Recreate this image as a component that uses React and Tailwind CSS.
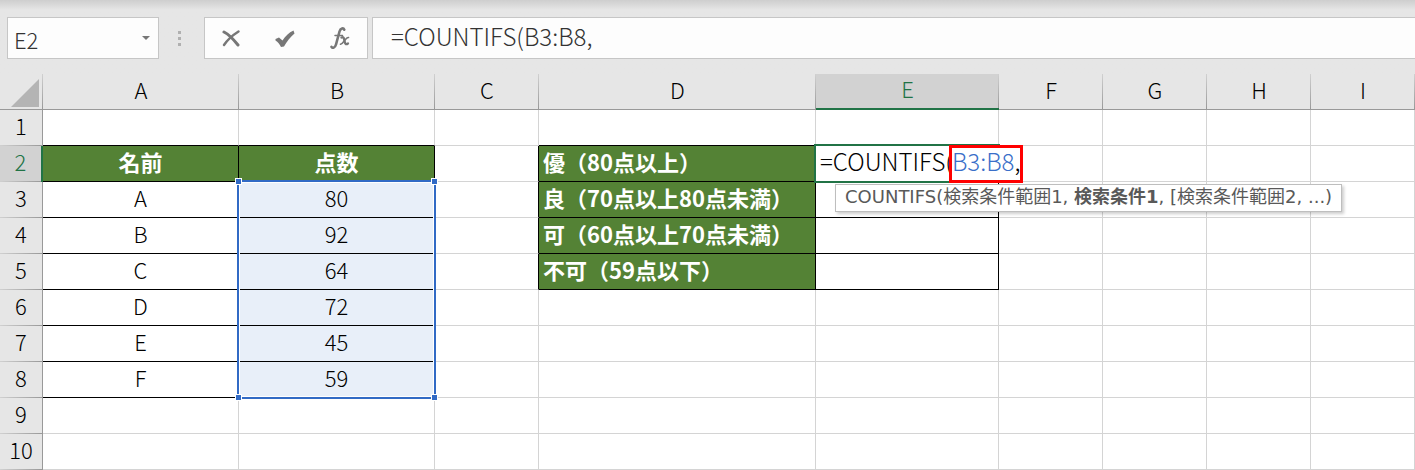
import { useState } from "react";

const columns = [
  { name: "A", width: "w-[196px]" },
  { name: "B", width: "w-[196px]" },
  { name: "C", width: "w-[104px]" },
  { name: "D", width: "w-[277px]" },
  { name: "E", width: "w-[183px]" },
  { name: "F", width: "w-[104px]" },
  { name: "G", width: "w-[104px]" },
  { name: "H", width: "w-[104px]" },
  { name: "I", width: "w-[104px]" },
];

const rows = [1, 2, 3, 4, 5, 6, 7, 8, 9, 10];

const values = {
  A2: "名前",
  B2: "点数",
  A3: "A",
  B3: "80",
  A4: "B",
  B4: "92",
  A5: "C",
  B5: "64",
  A6: "D",
  B6: "72",
  A7: "E",
  B7: "45",
  A8: "F",
  B8: "59",
  D2: "優（80点以上）",
  D3: "良（70点以上80点未満）",
  D4: "可（60点以上70点未満）",
  D5: "不可（59点以下）",
};

function cellClass(col, row) {
  const inScores = (col === "A" || col === "B") && row >= 2 && row <= 8;
  const inGrades = (col === "D" || col === "E") && row >= 2 && row <= 5;
  const blackRight = inScores || inGrades || (col === "C" && row >= 2 && row <= 5);
  const blackBottom =
    inScores || inGrades || (row === 1 && ["A", "B", "D", "E"].includes(col));
  const green = (inScores && row === 2) || (inGrades && col === "D");
  const picked = col === "B" && row >= 3 && row <= 8;

  return [
    "h-9 pt-0 pb-1.5 pr-0 border-r border-b leading-7 whitespace-nowrap",
    blackRight ? "border-r-black" : "border-r-[#d4d4d4]",
    blackBottom ? "border-b-black" : "border-b-[#d4d4d4]",
    green ? "bg-[#548235] text-white font-bold" : "font-light",
    picked ? "bg-[#e8eff9]" : "",
    col === "D" ? "text-left pl-1" : "text-center pl-0",
    (col === "B" && row === 3) || (col === "E" && row === 2) ? "relative" : "",
  ].join(" ");
}

function RangeOutline() {
  const handle = "absolute size-[7px] border border-white bg-[#316ac5]";
  return (
    <div className="absolute -top-0.5 -left-0.5 -right-0.5 z-10 h-[219px] border-2 border-[#316ac5]">
      <div className="h-full border border-white" />
      <span className={`${handle} -top-1 -left-1`} />
      <span className={`${handle} -top-1 -right-1`} />
      <span className={`${handle} -bottom-1 -left-1`} />
      <span className={`${handle} -bottom-1 -right-1`} />
    </div>
  );
}

function CellEditor() {
  return (
    <>
      <div className="absolute -top-0.5 -left-0.5 -right-0.5 z-10 h-[39px] border-2 border-[#217346] bg-white" />
      <div className="absolute top-0 left-1 z-20 flex h-[35px] items-center text-2xl leading-7">
        <span className="pb-1.5">=COUNTIFS(</span>
        <span className="relative -ml-1 flex h-[38px] items-center border-3 border-[#ff0000] bg-white">
          <span className="pb-1.5">
            <span className="text-[#3a6fc9]">B3:B8</span>,
          </span>
        </span>
      </div>
      <div
        role="tooltip"
        className="absolute top-[38px] left-[19px] z-30 flex h-7 items-center border border-[#bebebe] bg-white px-[9px] pb-0.5 font-['DejaVu_Sans','Noto_Sans_CJK_JP',sans-serif] text-lg leading-6 font-normal text-[#595959] shadow-[2px_2px_3px_rgba(0,0,0,0.2)]"
      >
        <span className="whitespace-pre">
          COUNTIFS(検索条件範囲1, <b>検索条件1</b>, [検索条件範囲2, ...)
        </span>
      </div>
    </>
  );
}

function FormulaBar() {
  const [name, setName] = useState("E2");
  const [formula, setFormula] = useState("=COUNTIFS(B3:B8,");

  return (
    <div className="flex h-[74px] items-start bg-linear-to-b from-[#cecece] to-[#e6e6e6] to-[10px] pt-[17px] pl-[7px]">
      <div className="flex h-[42px] w-[152px] shrink-0 items-center border border-[#c6c6c6] bg-[#fdfdfd]">
        <input
          aria-label="名前ボックス"
          value={name}
          onChange={(e) => setName(e.target.value)}
          className="h-full w-0 grow bg-transparent pt-0.5 pl-1.5 font-light text-[#333] outline-none"
        />
        <button aria-label="名前の一覧" className="flex h-full w-6 items-center justify-center">
          <svg width="8" height="4" viewBox="0 0 8 4">
            <path d="M0 0h8L4 4z" fill="#777" />
          </svg>
        </button>
      </div>
      <div className="flex h-[42px] w-[45px] shrink-0 items-center justify-center pr-1">
        <svg width="3" height="15" viewBox="0 0 3 15" fill="#b0b0b0">
          <path d="M0 0h3v3H0zM0 6h3v3H0zM0 12h3v3H0z" />
        </svg>
      </div>
      <div className="flex h-[42px] w-[164px] shrink-0 items-center justify-around border border-[#c6c6c6] bg-[#fdfdfd]">
        <button aria-label="キャンセル">
          <svg width="18" height="17" viewBox="0 0 18 17" fill="none" stroke="#777" strokeLinecap="round">
            <path d="M2 2C6 4 12 10 16 15" strokeWidth="3" />
            <path d="M16.500 1.500C11 5 6 9 2 15" strokeWidth="2.400" />
          </svg>
        </button>
        <button aria-label="入力">
          <svg width="20" height="17" viewBox="0 0 20 17" fill="#777">
            <path d="M.5 9 4 7.500 7.500 10.500C10 6.500 14 2.500 18.500.5L19.500 3.500C15.500 7 12 11 9 16.500L6 17C4.500 14 3 12 .5 10.500z" />
          </svg>
        </button>
        <button aria-label="関数の挿入">
          <svg width="20" height="22" viewBox="0 0 20 22" fill="none" stroke="#777" strokeLinecap="round">
            <path d="M14.300 2.700C13.500.8 10.500.8 9.500 4.500L6 17.500C5 21 2.500 21.500 1.500 19.800" strokeWidth="2.600" />
            <path d="M5 8.500h7.500" strokeWidth="1.500" />
            <path d="M11.500 10.500C14 9.500 14 12 14.500 14S15.500 18.200 18 16.500" strokeWidth="2.300" />
            <path d="M18.500 10.500C16 9.800 13.500 16.500 10.500 17.300" strokeWidth="1.600" />
          </svg>
        </button>
      </div>
      <input
        aria-label="数式バー"
        value={formula}
        onChange={(e) => setFormula(e.target.value)}
        className="ml-1 h-[42px] w-0 grow border border-r-0 border-[#c6c6c6] bg-[#fdfdfd] pb-1.5 pl-[18px] text-2xl font-light text-[#333] outline-none"
      />
    </div>
  );
}

export default function App() {
  return (
    <div className="min-h-screen w-full overflow-hidden bg-[#e6e6e6] font-['Noto_Sans_CJK_JP',sans-serif] text-[22px] text-black">
      <FormulaBar />
      <table className="w-full table-fixed border-separate border-spacing-0 bg-white">
        <colgroup>
          <col className="w-[43px]" />
          {columns.map((col) => (
            <col key={col.name} className={col.width} />
          ))}
        </colgroup>
        <thead>
          <tr>
            <th className="h-9 border-b border-[#999] bg-[#e6e6e6] bg-[linear-gradient(#d0d0d0,#999)] bg-[length:1px_100%] bg-right bg-no-repeat p-0">
              <svg width="28" height="28" viewBox="0 0 28 28" className="mt-0.5 ml-[11px] block">
                <path d="M28 0v28H0z" fill="#b4b4b4" />
              </svg>
            </th>
            {columns.map((col) => (
              <th
                key={col.name}
                scope="col"
                className={`h-9 bg-[linear-gradient(#d0d0d0,#999)] bg-[length:1px_100%] bg-right bg-no-repeat px-0 pt-0 pb-1.5 leading-7 font-light ${
                  col.name === "E"
                    ? "border-b-2 border-[#217346] bg-[#d2d2d2] text-[#217346]"
                    : "border-b border-[#999] bg-[#e6e6e6]"
                }`}
              >
                {col.name}
              </th>
            ))}
          </tr>
        </thead>
        <tbody>
          {rows.map((row) => (
            <tr key={row}>
              <th
                scope="row"
                className={`h-9 bg-[linear-gradient(to_right,#d0d0d0,#999)] bg-[length:100%_1px] bg-bottom bg-no-repeat px-0 pt-0 pb-1.5 leading-7 font-light ${
                  row === 2
                    ? "border-r-2 border-[#217346] bg-[#d2d2d2] text-[#217346]"
                    : "border-r border-[#999] bg-[#e6e6e6]"
                }`}
              >
                {row}
              </th>
              {columns.map((col) => (
                <td key={col.name} className={cellClass(col.name, row)}>
                  {values[col.name + row]}
                  {col.name === "B" && row === 3 && <RangeOutline />}
                  {col.name === "E" && row === 2 && <CellEditor />}
                </td>
              ))}
            </tr>
          ))}
        </tbody>
      </table>
    </div>
  );
}
